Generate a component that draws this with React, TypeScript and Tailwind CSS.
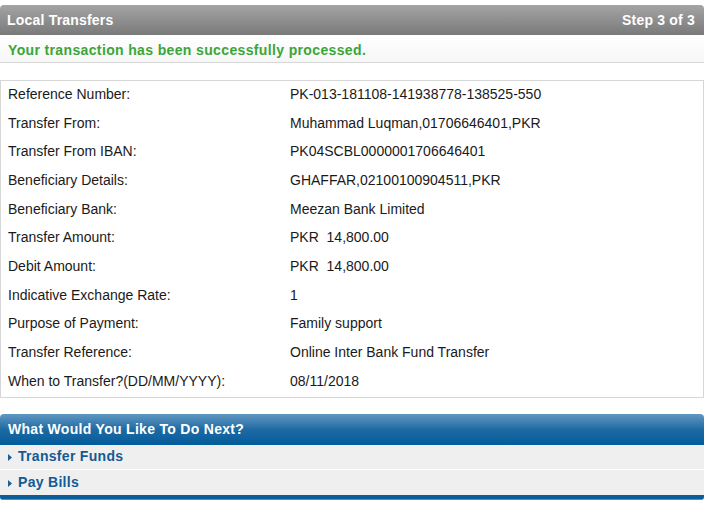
const rows: [string, string][] = [
  ['Reference Number:', 'PK-013-181108-141938778-138525-550'],
  ['Transfer From:', 'Muhammad Luqman,01706646401,PKR'],
  ['Transfer From IBAN:', 'PK04SCBL0000001706646401'],
  ['Beneficiary Details:', 'GHAFFAR,02100100904511,PKR'],
  ['Beneficiary Bank:', 'Meezan Bank Limited'],
  ['Transfer Amount:', 'PKR\u00a0\u00a014,800.00'],
  ['Debit Amount:', 'PKR\u00a0\u00a014,800.00'],
  ['Indicative Exchange Rate:', '1'],
  ['Purpose of Payment:', 'Family support'],
  ['Transfer Reference:', 'Online Inter Bank Fund Transfer'],
  ['When to Transfer?(DD/MM/YYYY):', '08/11/2018'],
]

const Arrow = () => (
  <svg width="4" height="7" viewBox="0 0 4 7" className="mr-[6px] mt-[2px]">
    <path d="M0 0 L4 3.5 L0 7 Z" fill="#1a5f98" />
  </svg>
)

export default function App() {
  return (
    <div className="w-[715px] h-[516px] bg-white font-['Liberation_Sans',Arial,sans-serif] text-[14px] text-[#1a1a1a]">
      <div className="w-[704px] pt-[5px]">
        {/* gray title bar */}
        <div className="h-[30px] rounded-t-[4px] bg-gradient-to-b from-[#a4a4a4] to-[#7a7a7a] flex items-center justify-between px-[7px] text-white font-bold tracking-[0.2px]">
          <span>Local Transfers</span>
          <span className="pr-[2px]">Step 3 of 3</span>
        </div>
        {/* success message */}
        <div className="h-[28px] bg-gradient-to-b from-white to-[#f6f6f6] border-b border-[#d8d8d8] flex items-center px-[8px] pt-[3px] text-[#3ca53a] font-bold tracking-[0.36px]">
          Your transaction has been successfully processed.
        </div>

        {/* details table */}
        <div className="mt-[17px] border border-[#d6d6d6]">
          {rows.map(([label, value]) => (
            <div key={label} className="h-[28.7px] pb-[2px] flex items-center">
              <div className="w-[289px] pl-[7px]">{label}</div>
              <div>{value}</div>
            </div>
          ))}
        </div>

        {/* next actions */}
        <div className="mt-[16px]">
          <div className="h-[31px] rounded-t-[4px] bg-gradient-to-b from-[#5f98c2] via-[#1d6aa3] to-[#005c9b] flex items-center px-[8px] text-white font-bold tracking-[0.3px]">
            What Would You Like To Do Next?
          </div>
          <div className="h-[25px] bg-[#efefef] border-b border-white flex items-center px-[8px] text-[#135a94] font-bold tracking-[0.3px]">
            <Arrow />
            Transfer Funds
          </div>
          <div className="h-[25px] bg-[#efefef] flex items-center px-[8px] text-[#135a94] font-bold tracking-[0.3px]">
            <Arrow />
            Pay Bills
          </div>
          <div className="h-[5px] rounded-b-[3px] bg-[#0b5e9a] border-b border-[#5c8fb8]" />
        </div>
      </div>
    </div>
  )
}
